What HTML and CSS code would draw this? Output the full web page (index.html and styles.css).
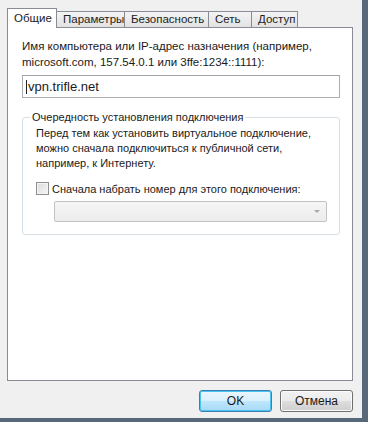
FILE: index.html
```html
<!DOCTYPE html>
<html>

<head>
    <meta charset="UTF-8">
    <meta name="viewport" content="width=device-width, initial-scale=1.0">
    <title>Свойства подключения</title>

    <link rel="stylesheet" href="styles.css">

</head>

<body>
    <div class="dialog">
        <div class="tabs">
            <div class="tab active">Общие</div>
            <div class="tab w-params">Параметры</div>
            <div class="tab w-security">Безопасность</div>
            <div class="tab w-net">Сеть</div>
            <div class="tab w-access">Доступ</div>
        </div>

        <div class="panel">
            <label class="host-label" for="host">Имя компьютера или IP-адрес назначения (например,<br>microsoft.com, 157.54.0.1 или 3ffe:1234::1111):</label>
            <div class="textbox"><span class="caret"></span><span id="host">vpn.trifle.net</span></div>

            <fieldset class="group">
                <legend>Очередность установления подключения</legend>
                <p class="hint">Перед тем как установить виртуальное подключение,<br>можно сначала подключиться к публичной сети,<br>например, к Интернету.</p>
                <div class="check-row">
                    <span class="checkbox"></span>
                    <span>Сначала набрать номер для этого подключения:</span>
                </div>
                <div class="combo">
                    <span class="arrow"></span>
                </div>
            </fieldset>
        </div>

        <div class="footer">
            <button class="btn default">OK</button>
            <button class="btn">Отмена</button>
        </div>
    </div>
</body>

</html>
```

FILE: styles.css
```css
body {
    margin: 0;
    padding: 0;
    width: 368px;
    height: 422px;
    overflow: hidden;
    background-color: #f0f0f0;
    font-family: 'Liberation Sans', Arial, sans-serif;
    font-size: 11px;
    color: #1a1a1a;
}

.dialog {
    box-sizing: border-box;
    width: 368px;
    height: 422px;
    padding: 8px 9px 0 7px;
    border-right: 6px solid #56687a;
    border-bottom: 4px solid #56687a;
    display: flex;
    flex-direction: column;
    white-space: nowrap;
}

.tabs {
    display: flex;
    align-items: flex-end;
    height: 19px;
    position: relative;
    z-index: 1;
}

.tab {
    box-sizing: border-box;
    height: 16px;
    line-height: 15px;
    padding-left: 6px;
    border: 1px solid #898c95;
    border-bottom: none;
    margin-left: -1px;
    background: linear-gradient(#f4f4f4, #e2e2e2);
    color: #222;
    font-size: 11.5px;
}

.tab.active {
    width: 50px;
    height: 20px;
    margin-left: 0;
    line-height: 19px;
    background: #fff;
    margin-bottom: -1px;
    border-color: #898c95;
}

.w-params { width: 69px; }
.w-security { width: 85px; }
.w-net { width: 44px; }
.w-access { width: 47px; }

.panel {
    box-sizing: border-box;
    width: 346px;
    height: 354px;
    background: #fff;
    border: 1px solid #898c95;
    padding: 10px 12px 0 14px;
}

.host-label {
    display: block;
    line-height: 16px;
    font-size: 11.5px;
}

.textbox {
    box-sizing: border-box;
    margin-top: 5px;
    width: 318px;
    height: 23px;
    border: 1px solid #abadb3;
    border-top-color: #a0a3aa;
    padding: 0 3px;
    display: flex;
    align-items: center;
    font-size: 13px;
}

.caret {
    width: 1px;
    height: 14px;
    background: #222;
    margin-right: 1px;
}

.group {
    box-sizing: border-box;
    width: 318px;
    height: 125px;
    margin: 12px 0 0;
    padding: 0 12px 0 13px;
    border: 1px solid #d5dfe5;
    border-radius: 3px;
}

.group legend {
    padding: 0 2px;
    margin-left: -6px;
    line-height: 14px;
}

.hint {
    margin: 2px 0 0;
    line-height: 15px;
}

.check-row {
    display: flex;
    align-items: center;
    gap: 3px;
    margin-top: 11px;
}

.checkbox {
    box-sizing: border-box;
    width: 13px;
    height: 13px;
    border: 1px solid #8f8f8f;
    background: linear-gradient(135deg, #dcdcdc, #f6f6f6);
    box-shadow: inset 0 0 0 1px #f4f4f4;
}

.combo {
    box-sizing: border-box;
    position: relative;
    width: 273px;
    height: 21px;
    margin: 6px 0 0 18px;
    border: 1px solid #c2c2c2;
    border-radius: 2px;
    background: linear-gradient(#f6f6f6, #ececec);
}

.arrow {
    position: absolute;
    right: 6px;
    top: 8px;
    border-left: 3px solid transparent;
    border-right: 3px solid transparent;
    border-top: 3px solid #a8a8a8;
}

.footer {
    display: flex;
    justify-content: flex-end;
    gap: 8px;
    padding-top: 9px;
    width: 346px;
}

.btn {
    box-sizing: border-box;
    width: 73px;
    height: 22px;
    padding: 0;
    font-family: inherit;
    font-size: 12px;
    color: #1a1a1a;
    border: 1px solid #707070;
    border-radius: 3px;
    background: linear-gradient(#f2f2f2 0%, #ebebeb 50%, #dddddd 51%, #cfcfcf 100%);
    box-shadow: inset 0 0 0 1px #fbfbfb;
}

.btn.default {
    border-color: #3c7fb1;
    background: linear-gradient(#eaf6fd 0%, #d9f0fc 50%, #bee6fd 51%, #a7d9f5 100%);
    box-shadow: inset 0 0 0 1px #48c3f4;
}
```
